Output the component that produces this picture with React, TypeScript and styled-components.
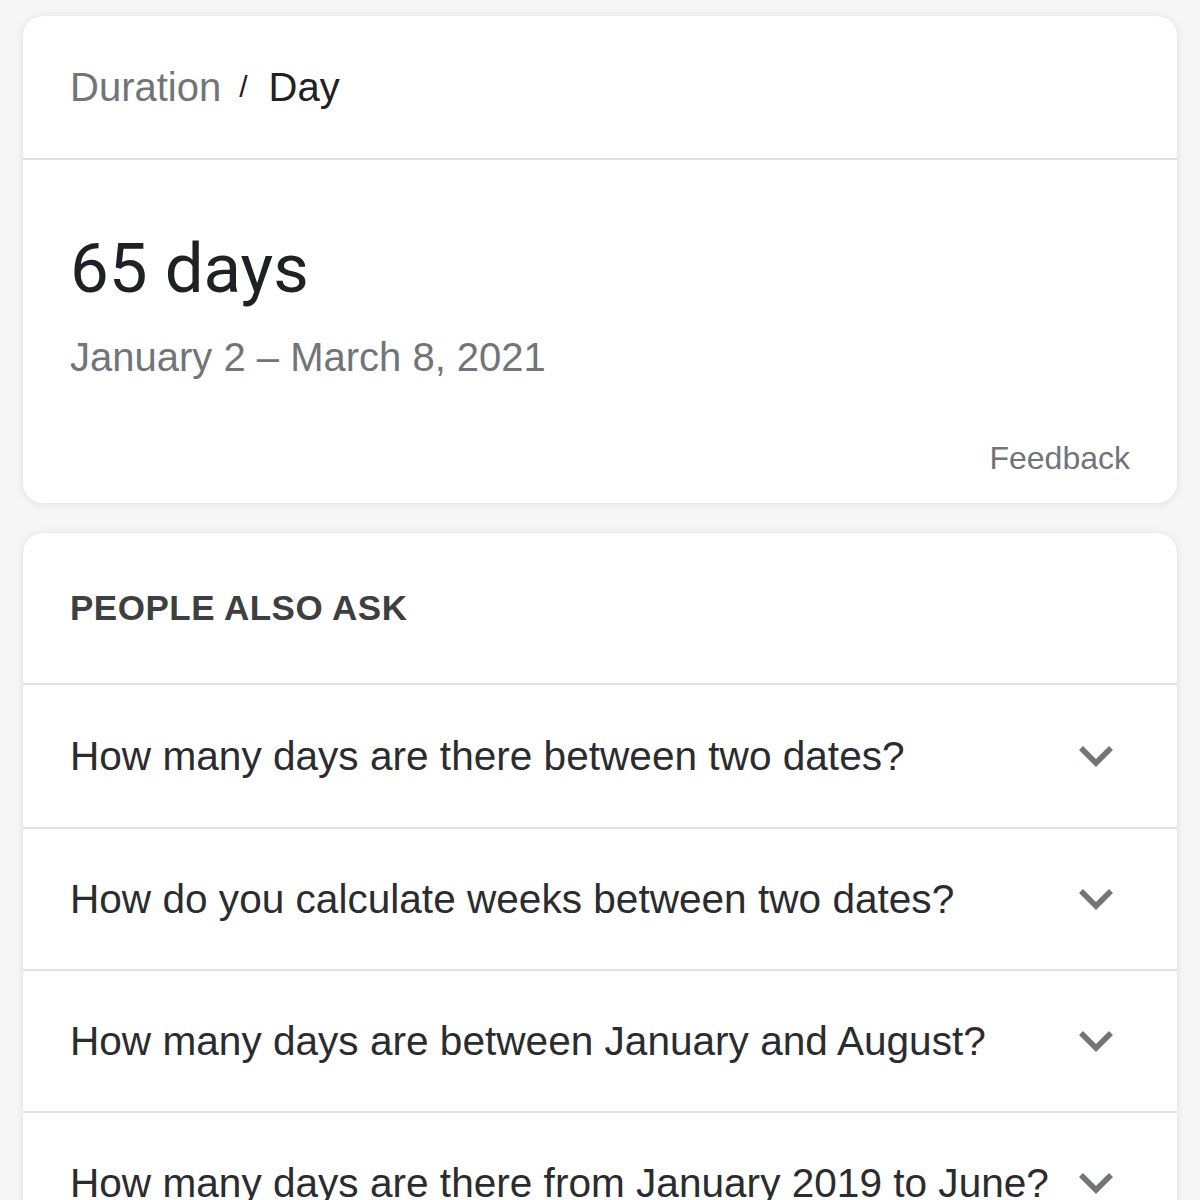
import React from "react";
import styled, { createGlobalStyle } from "styled-components";

const Global = createGlobalStyle`
  html, body { margin: 0; padding: 0; background: #f6f6f7; }
  body { font-family: "Liberation Sans", Arial, sans-serif; }
`;

const Page = styled.div`
  width: 1200px;
  height: 1200px;
  overflow: hidden;
  box-sizing: border-box;
  padding: 16px 23px 0 23px;
  display: flex;
  flex-direction: column;
  gap: 30px;
`;

const Card = styled.section`
  flex: none;
  background: #fff;
  border-radius: 20px;
  box-shadow: 0 1px 10px rgba(0, 0, 0, 0.09), 0 0 2px rgba(0, 0, 0, 0.05);
  display: flex;
  flex-direction: column;
  overflow: hidden;
`;

const CardHeader = styled.div<{ $h: number }>`
  flex: none;
  height: ${(p) => p.$h}px;
  box-sizing: border-box;
  display: flex;
  align-items: center;
  padding: 0 47px;
  border-bottom: 2px solid #e0e1e4;
`;

const Crumb = styled.span<{ $active?: boolean }>`
  font-size: 40px;
  line-height: 48px;
  color: ${(p) => (p.$active ? "#202124" : "#70757a")};
`;

const Slash = styled.span`
  font-size: 30px;
  line-height: 48px;
  color: #202124;
  margin: 0 21px 0 18px;
`;

const Body = styled.div`
  flex: none;
  display: flex;
  flex-direction: column;
  padding: 69px 47px 25px 47px;
`;

const BigValue = styled.div`
  font-family: Roboto, "Open Sans", sans-serif;
  font-size: 69px;
  line-height: 80px;
  color: #202124;
`;

const DateRange = styled.div`
  font-size: 40px;
  line-height: 48px;
  color: #70757a;
  margin-top: 24px;
`;

const Feedback = styled.div`
  align-self: flex-end;
  font-size: 32px;
  line-height: 40px;
  color: #70757a;
  margin-top: 57px;
`;

const SectionTitle = styled.h2`
  margin: 0;
  font-size: 35px;
  line-height: 44px;
  font-weight: 700;
  color: #3c4043;
  letter-spacing: 0.5px;
`;

const QuestionRow = styled.div<{ $first?: boolean }>`
  flex: none;
  height: 142px;
  box-sizing: border-box;
  display: flex;
  align-items: center;
  gap: 16px;
  padding: 0 64px 0 47px;
  border-top: ${(p) => (p.$first ? "none" : "2px solid #e0e1e4")};
`;

const QuestionText = styled.span`
  flex: 1;
  min-width: 0;
  font-size: 40.6px;
  line-height: 48px;
  color: #2b2c2f;
  white-space: nowrap;
`;

const Chevron = styled.svg`
  width: 34px;
  height: 21px;
  flex: none;
  fill: #70757a;
`;

const ExpandIcon = () => (
  <Chevron viewBox="6 8.59 12 7.41">
    <path d="M16.59 8.59L12 13.17 7.41 8.59 6 10l6 6 6-6z" />
  </Chevron>
);

const questions = [
  "How many days are there between two dates?",
  "How do you calculate weeks between two dates?",
  "How many days are between January and August?",
  "How many days are there from January 2019 to June?",
];

export default function App() {
  return (
    <>
      <Global />
      <Page>
        <Card>
          <CardHeader $h={144}>
            <Crumb>Duration</Crumb>
            <Slash>/</Slash>
            <Crumb $active>Day</Crumb>
          </CardHeader>
          <Body>
            <BigValue>65 days</BigValue>
            <DateRange>January 2 – March 8, 2021</DateRange>
            <Feedback>Feedback</Feedback>
          </Body>
        </Card>
        <Card>
          <CardHeader $h={152}>
            <SectionTitle>PEOPLE ALSO ASK</SectionTitle>
          </CardHeader>
          {questions.map((q, i) => (
            <QuestionRow key={q} $first={i === 0}>
              <QuestionText>{q}</QuestionText>
              <ExpandIcon />
            </QuestionRow>
          ))}
        </Card>
      </Page>
    </>
  );
}
